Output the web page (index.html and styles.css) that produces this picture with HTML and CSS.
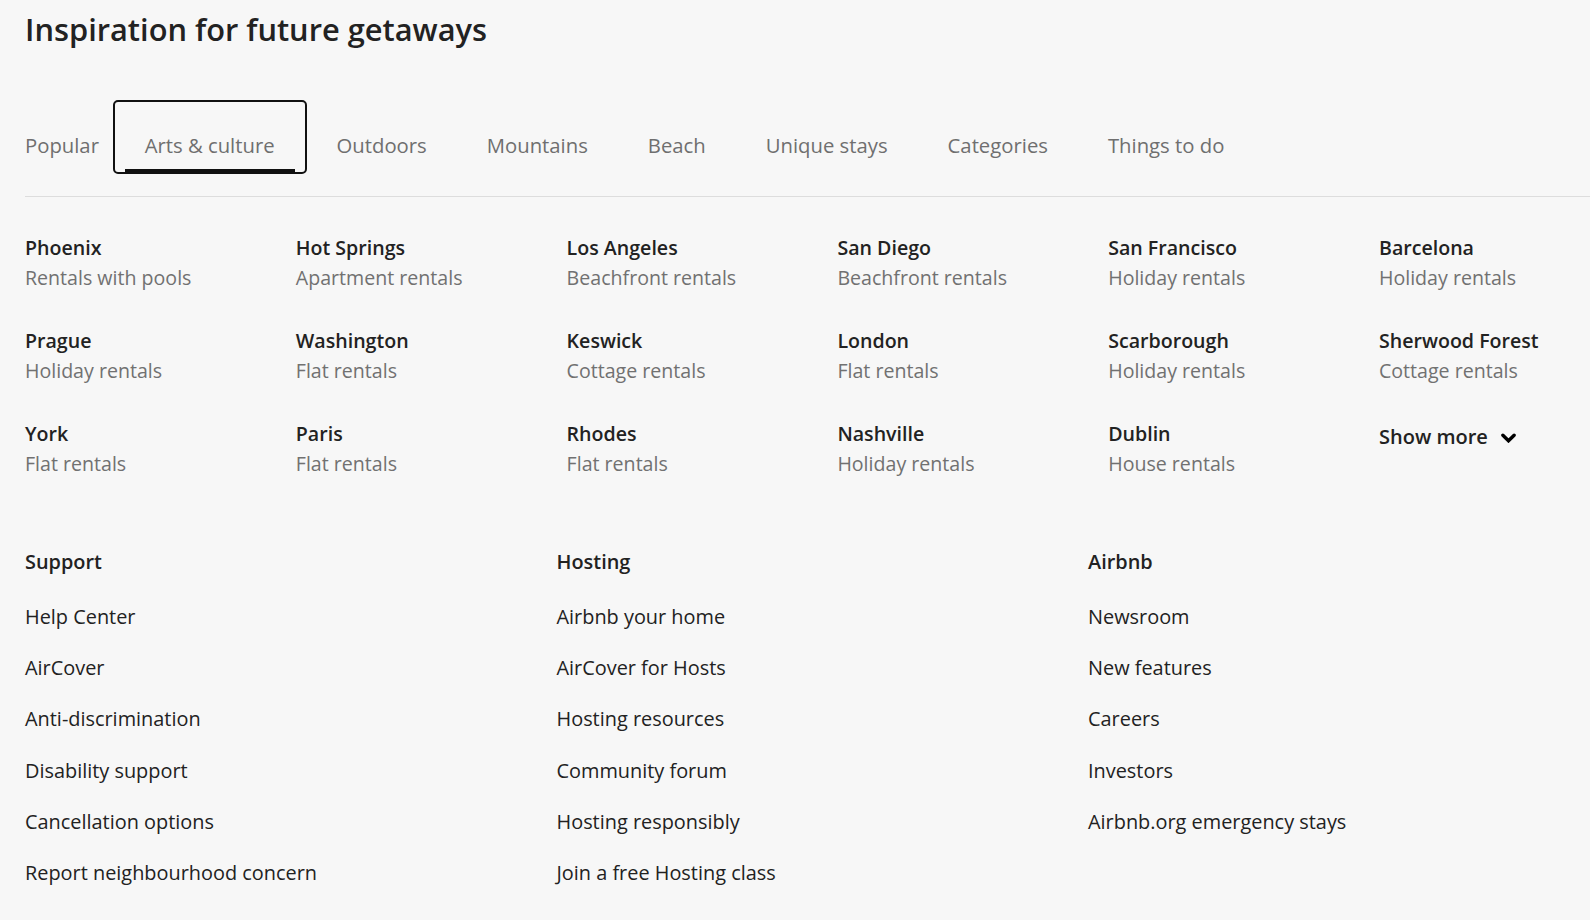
FILE: index.html
```html
<!DOCTYPE html>
<html lang="en">
<head>
<meta charset="utf-8">
<title>Inspiration for future getaways</title>
<link rel="stylesheet" href="styles.css">
</head>
<body>
<main class="page">
  <h2 class="title">Inspiration for future getaways</h2>

  <div class="tabs" role="tablist">
    <button class="tab tab-first" role="tab">Popular</button>
    <button class="tab tab-active" role="tab">Arts &amp; culture</button>
    <button class="tab" role="tab">Outdoors</button>
    <button class="tab" role="tab">Mountains</button>
    <button class="tab" role="tab">Beach</button>
    <button class="tab" role="tab">Unique stays</button>
    <button class="tab" role="tab">Categories</button>
    <button class="tab" role="tab">Things to do</button>
  </div>

  <ul class="cities">
    <li class="city"><span class="city-name">Phoenix</span><span class="city-type">Rentals with pools</span></li>
    <li class="city"><span class="city-name">Hot Springs</span><span class="city-type">Apartment rentals</span></li>
    <li class="city"><span class="city-name">Los Angeles</span><span class="city-type">Beachfront rentals</span></li>
    <li class="city"><span class="city-name">San Diego</span><span class="city-type">Beachfront rentals</span></li>
    <li class="city"><span class="city-name">San Francisco</span><span class="city-type">Holiday rentals</span></li>
    <li class="city"><span class="city-name">Barcelona</span><span class="city-type">Holiday rentals</span></li>

    <li class="city"><span class="city-name">Prague</span><span class="city-type">Holiday rentals</span></li>
    <li class="city"><span class="city-name">Washington</span><span class="city-type">Flat rentals</span></li>
    <li class="city"><span class="city-name">Keswick</span><span class="city-type">Cottage rentals</span></li>
    <li class="city"><span class="city-name">London</span><span class="city-type">Flat rentals</span></li>
    <li class="city"><span class="city-name">Scarborough</span><span class="city-type">Holiday rentals</span></li>
    <li class="city"><span class="city-name">Sherwood Forest</span><span class="city-type">Cottage rentals</span></li>

    <li class="city"><span class="city-name">York</span><span class="city-type">Flat rentals</span></li>
    <li class="city"><span class="city-name">Paris</span><span class="city-type">Flat rentals</span></li>
    <li class="city"><span class="city-name">Rhodes</span><span class="city-type">Flat rentals</span></li>
    <li class="city"><span class="city-name">Nashville</span><span class="city-type">Holiday rentals</span></li>
    <li class="city"><span class="city-name">Dublin</span><span class="city-type">House rentals</span></li>
    <li class="city">
      <button class="show-more">
        <span>Show more</span>
        <svg class="chevron" viewBox="0 0 16 10" width="15" height="10" aria-hidden="true">
          <path d="M2 2 L8 8 L14 2" fill="none" stroke="#000" stroke-width="3.6" stroke-linecap="round" stroke-linejoin="miter"/>
        </svg>
      </button>
    </li>
  </ul>

  <footer class="links">
    <section class="link-col">
      <h3 class="link-head">Support</h3>
      <ul class="link-list">
        <li>Help Center</li>
        <li>AirCover</li>
        <li>Anti-discrimination</li>
        <li>Disability support</li>
        <li>Cancellation options</li>
        <li>Report neighbourhood concern</li>
      </ul>
    </section>
    <section class="link-col">
      <h3 class="link-head">Hosting</h3>
      <ul class="link-list">
        <li>Airbnb your home</li>
        <li>AirCover for Hosts</li>
        <li>Hosting resources</li>
        <li>Community forum</li>
        <li>Hosting responsibly</li>
        <li>Join a free Hosting class</li>
      </ul>
    </section>
    <section class="link-col">
      <h3 class="link-head">Airbnb</h3>
      <ul class="link-list">
        <li>Newsroom</li>
        <li>New features</li>
        <li>Careers</li>
        <li>Investors</li>
        <li>Airbnb.org emergency stays</li>
      </ul>
    </section>
  </footer>
</main>
</body>
</html>
```

FILE: styles.css
```css
html, body {
  margin: 0;
  padding: 0;
  background: #f7f7f7;
  overflow: hidden;
}

body {
  font-family: "Open Sans", "Noto Sans", "Liberation Sans", sans-serif;
  color: #222222;
}

.page {
  padding: 9px 0 0 25px;
}

.title {
  margin: 0;
  font-size: 30.8px;
  line-height: 40px;
  font-weight: 600;
  color: #222222;
}

/* Tabs */
.tabs {
  display: flex;
  align-items: flex-start;
  margin-top: 51px;
  padding-bottom: 22px;
  border-bottom: 1px solid #dddddd;
}

.tab {
  position: relative;
  font-family: inherit;
  font-size: 20.3px;
  line-height: 24px;
  font-weight: 400;
  color: #6f6f6f;
  background: none;
  border: 2px solid transparent;
  border-radius: 5px;
  padding: 31px 28px 15px;
  margin: 0;
  white-space: nowrap;
  cursor: pointer;
}

.tab-first {
  padding-left: 0;
  padding-right: 11.7px;
  border-left-width: 0;
}

.tab-active {
  border-color: #111111;
  padding-left: 30px;
  padding-right: 30px;
}

.tab-active::after {
  content: "";
  position: absolute;
  left: 10px;
  right: 10px;
  bottom: 0;
  height: 3px;
  background: #111111;
}

/* Cities grid */
.cities {
  list-style: none;
  margin: 36px 0 0;
  padding: 0;
  display: grid;
  grid-template-columns: repeat(6, 246.8px);
  column-gap: 24px;
  row-gap: 33px;
}

.city {
  display: flex;
  flex-direction: column;
}

.city-name {
  font-size: 19.6px;
  line-height: 30px;
  font-weight: 600;
  color: #222222;
  white-space: nowrap;
}

.city-type {
  font-size: 19.6px;
  line-height: 30px;
  font-weight: 400;
  color: #717171;
  white-space: nowrap;
}

.show-more {
  display: flex;
  align-items: center;
  gap: 13px;
  margin: 6px 0 0;
  padding: 0;
  border: 0;
  background: none;
  font-family: inherit;
  font-size: 20px;
  line-height: 24px;
  font-weight: 600;
  color: #222222;
  cursor: pointer;
}

.chevron {
  display: block;
  margin-top: 1px;
}

/* Footer links */
.links {
  display: grid;
  grid-template-columns: repeat(3, 531.5px);
  margin-top: 71px;
}

.link-head {
  margin: 0;
  font-size: 19.9px;
  line-height: 24px;
  font-weight: 600;
  color: #222222;
}

.link-list {
  list-style: none;
  margin: 31px 0 0;
  padding: 0;
  display: flex;
  flex-direction: column;
  gap: 27.2px;
}

.link-list li {
  font-size: 19.9px;
  line-height: 24px;
  color: #222222;
  white-space: nowrap;
}
```
